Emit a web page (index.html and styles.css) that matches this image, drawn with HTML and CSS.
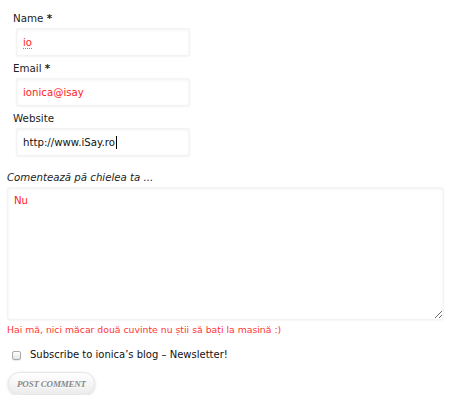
FILE: index.html
```html
<!DOCTYPE html>
<html>
<head>
<meta charset="utf-8">
<link rel="stylesheet" href="styles.css">
</head>
<body>
<form class="form">
  <div class="fields">
    <div class="field">
      <label class="label">Name <span class="req">*</span></label>
      <div class="input"><span class="typo">io</span></div>
    </div>
    <div class="field">
      <label class="label">Email <span class="req">*</span></label>
      <div class="input">ionica@isay</div>
    </div>
    <div class="field">
      <label class="label">Website</label>
      <div class="input dark">http://www.iSay.ro<span class="caret"></span></div>
    </div>
  </div>
  <div class="comment">
    <label class="clabel">Comentează pă chielea ta ...</label>
    <textarea class="area">Nu</textarea>
  </div>
  <p class="error">Hai mă, nici măcar două cuvinte nu știi să bați la masină :)</p>
  <div class="subscribe">
    <input type="checkbox" class="check">
    <label class="slabel">Subscribe to ionica’s blog – Newsletter!</label>
  </div>
  <button type="button" class="btn">Post Comment</button>
</form>
</body>
</html>
```
FILE: styles.css
```css
html, body {
  margin: 0;
  padding: 0;
  background: #fff;
}
body {
  font-family: "DejaVu Sans", Verdana, sans-serif;
  font-size: 10px;
  color: #222;
}
.form {
  display: flex;
  flex-direction: column;
  padding: 0 13px 0 7px;
}
.fields {
  display: flex;
  flex-direction: column;
  padding: 11px 0 0 6px;
  gap: 5px;
}
.field {
  display: flex;
  flex-direction: column;
  gap: 3px;
}
.label {
  display: block;
  line-height: 14px;
  font-size: 10.3px;
  color: #222;
}
.req {
  font-weight: bold;
}
.input {
  margin-left: 3px;
  width: 174px;
  height: 28px;
  box-sizing: border-box;
  padding: 0 6px;
  display: flex;
  align-items: center;
  background: #fff;
  border: 1px solid #f3f3f3;
  border-radius: 2px;
  box-shadow: inset 0 1px 3px rgba(0,0,0,0.06), 0 1px 2px rgba(0,0,0,0.05);
  color: #f22;
  font-size: 10.2px;
}
.input.dark {
  color: #111;
}
.typo {
  text-decoration: underline dotted #f55;
  text-underline-offset: 2px;
}
.caret {
  display: inline-block;
  width: 1px;
  height: 13px;
  background: #000;
  margin-left: 1px;
}
.comment {
  display: flex;
  flex-direction: column;
  margin-top: 15px;
  gap: 2px;
}
.clabel {
  display: block;
  font-style: italic;
  line-height: 14px;
  font-size: 10.2px;
  color: #222;
}
.area {
  display: block;
  width: 437px;
  height: 133px;
  box-sizing: border-box;
  margin: 0;
  padding: 7px 6px;
  font-family: "DejaVu Sans", Verdana, sans-serif;
  font-size: 10.2px;
  color: #f22;
  background: #fff;
  border: 1px solid #f3f3f3;
  border-radius: 3px;
  box-shadow: inset 0 1px 3px rgba(0,0,0,0.06), 0 1px 2px rgba(0,0,0,0.04);
  outline: none;
}
.error {
  margin: 3px 0 0;
  line-height: 14px;
  color: #f33;
  font-size: 9.3px;
}
.subscribe {
  display: flex;
  align-items: center;
  margin-top: 11px;
  padding-left: 5px;
  gap: 9px;
}
.check {
  appearance: none;
  -webkit-appearance: none;
  margin: 0;
  width: 9px;
  height: 9px;
  border: 1px solid #aaa;
  border-radius: 2px;
  background: linear-gradient(#fff, #e4e4e4);
  box-shadow: 0 1px 1px rgba(0,0,0,0.08);
}
.slabel {
  font-size: 10px;
  line-height: 14px;
  color: #111;
}
.btn {
  align-self: flex-start;
  margin: 10px 0 0 1px;
  width: 87px;
  height: 23px;
  padding: 0;
  border: 1px solid #e6e6e6;
  border-radius: 12px;
  background: linear-gradient(#ffffff, #ececec);
  box-shadow: 0 1px 3px rgba(0,0,0,0.18);
  font-family: "Liberation Serif", Georgia, serif;
  font-weight: bold;
  font-style: italic;
  text-transform: uppercase;
  font-size: 9px;
  letter-spacing: -0.2px;
  color: #888;
  text-shadow: 0 1px 0 #fff;
}
```
